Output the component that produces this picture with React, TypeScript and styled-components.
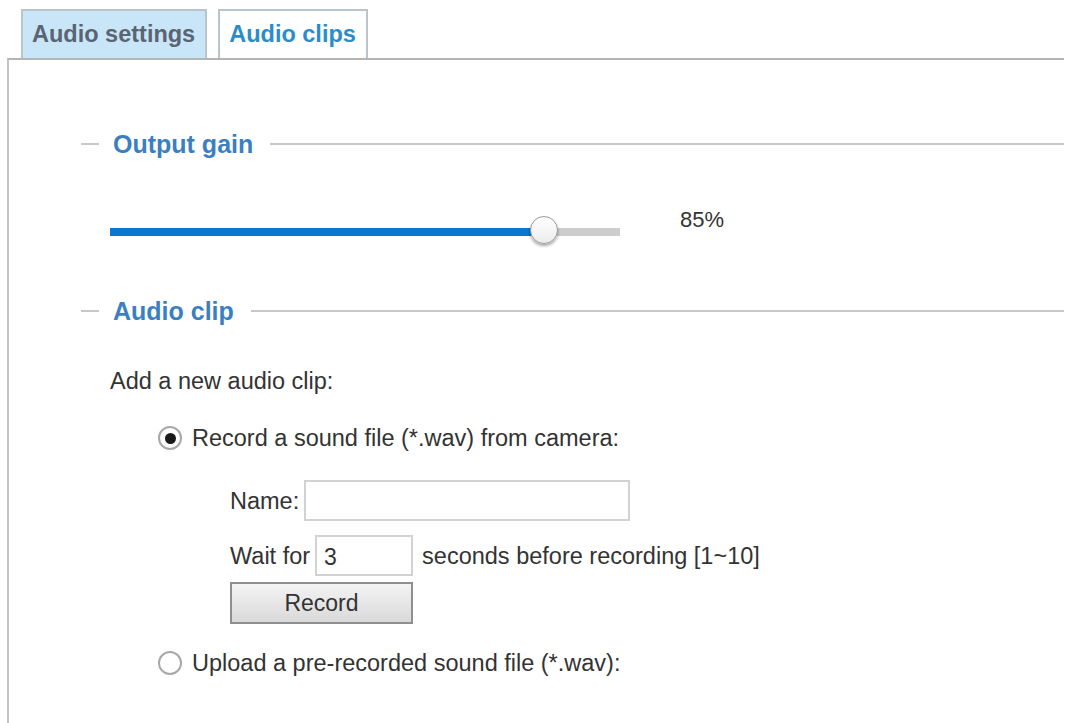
import styled, { createGlobalStyle } from 'styled-components';

const GlobalStyle = createGlobalStyle`
  html, body {
    margin: 0;
    padding: 0;
    background: #ffffff;
  }

  body {
    font-family: "Liberation Sans", Arial, sans-serif;
    color: #333333;
  }
`;

const tabs = [
  { label: 'Audio settings', active: false },
  { label: 'Audio clips', active: true },
];

function Legend(props: Readonly<{ title: string }>) {
  return (
    <LegendRow>
      <Dash />
      <LegendTitle>{props.title}</LegendTitle>
      <Rule />
    </LegendRow>
  );
}

function Radio(props: Readonly<{ checked: boolean }>) {
  return (
    <RadioCircle>
      {props.checked && <RadioDot />}
    </RadioCircle>
  );
}

function App() {
  const gain = 85;

  return (
    <Page>
      <GlobalStyle />

      <TabBar>
        { tabs.map((tab) => (
          <Tab key={tab.label} active={tab.active}>{tab.label}</Tab>
        ))}
      </TabBar>

      <Panel>
        <Legend title='Output gain' />

        <SliderRow>
          <Track>
            <TrackFill style={{ width: `${gain}%` }} />
            <Thumb style={{ left: `${gain}%` }} />
          </Track>
          <GainValue>{gain}%</GainValue>
        </SliderRow>

        <Legend title='Audio clip' />

        <Section>
          <Text>Add a new audio clip:</Text>

          <OptionRow>
            <Radio checked />
            <Text>Record a sound file (*.wav) from camera:</Text>
          </OptionRow>

          <RecordForm>
            <FieldRow>
              <Text>Name:</Text>
              <TextInput width={326} />
            </FieldRow>
            <FieldRow>
              <Text>Wait for</Text>
              <TextInput width={98} defaultValue='3' />
              <Hint>seconds before recording [1~10]</Hint>
            </FieldRow>
            <RecordButton>Record</RecordButton>
          </RecordForm>

          <OptionRow>
            <Radio checked={false} />
            <Text>Upload a pre-recorded sound file (*.wav):</Text>
          </OptionRow>
        </Section>
      </Panel>
    </Page>
  );
}

const Page = styled.div`
  width: 1070px;
  height: 723px;
  overflow: hidden;
`;

const TabBar = styled.div`
  display: flex;
  gap: 11px;
  padding: 9px 0 0 21px;
`;

const Tab = styled.div<{ active: boolean }>`
  box-sizing: border-box;
  height: 49px;
  padding: 0 10px 0 9px;
  display: flex;
  align-items: center;
  border: 2px solid #b9c4cc;
  border-bottom: none;
  background-color: ${props => props.active ? '#ffffff' : '#c8e6f8'};
  color: ${props => props.active ? '#2b8ccb' : '#5a6472'};
  font-weight: 700;
  font-size: 23.5px;
`;

const Panel = styled.div`
  box-sizing: border-box;
  margin-left: 7px;
  width: 1057px;
  height: 665px;
  border-top: 2px solid #b4b4b4;
  border-left: 2px solid #c4c4c4;
  padding: 69px 0 0 72px;
`;

const LegendRow = styled.div`
  display: flex;
  align-items: center;
  height: 30px;
`;

const Dash = styled.div`
  width: 18px;
  height: 2px;
  background-color: #c8c8c8;
  margin-right: 14px;
`;

const LegendTitle = styled.span`
  color: #3b7fc3;
  font-weight: 700;
  font-size: 25px;
  margin-right: 17px;
`;

const Rule = styled.div`
  flex: 1;
  height: 2px;
  background-color: #c8c8c8;
`;

const SliderRow = styled.div`
  display: flex;
  align-items: center;
  padding-left: 29px;
  margin: 53px 0 44px;
  height: 40px;
`;

const Track = styled.div`
  position: relative;
  width: 510px;
  height: 8px;
  background-color: #cdcdcd;
`;

const TrackFill = styled.div`
  height: 100%;
  background-color: #0b77cf;
`;

const Thumb = styled.div`
  position: absolute;
  top: 50%;
  width: 28px;
  height: 28px;
  margin: -16px 0 0 -14px;
  box-sizing: border-box;
  border-radius: 50%;
  border: 1px solid #9a9a9a;
  background: linear-gradient(#ffffff, #ececec);
  box-shadow: 0 2px 3px rgba(0, 0, 0, 0.35);
`;

const GainValue = styled.span`
  align-self: flex-start;
  margin-left: 60px;
  font-size: 22px;
  line-height: 16px;
  color: #333333;
`;

const Section = styled.div`
  display: flex;
  flex-direction: column;
  align-items: flex-start;
  padding: 41px 0 0 29px;
`;

const Text = styled.span`
  font-size: 23.5px;
  line-height: 28px;
  color: #333333;
  white-space: nowrap;
`;

const Hint = styled(Text)`
  margin-left: 4px;
`;

const OptionRow = styled.div`
  display: flex;
  align-items: center;
  gap: 10px;
  margin: 29px 0 0 48px;

  & + & {
    margin-top: 25px;
  }
`;

const RadioCircle = styled.span`
  box-sizing: border-box;
  width: 24px;
  height: 24px;
  border-radius: 50%;
  border: 2px solid #a8a8a8;
  background: #ffffff;
  display: flex;
  align-items: center;
  justify-content: center;
`;

const RadioDot = styled.span`
  width: 11px;
  height: 11px;
  border-radius: 50%;
  background-color: #1a1a1a;
`;

const RecordForm = styled.div`
  display: flex;
  flex-direction: column;
  align-items: flex-start;
  margin: 28px 0 0 120px;

  & + ${OptionRow} {
    margin-top: 25px;
  }
`;

const FieldRow = styled.div`
  display: flex;
  align-items: center;
  gap: 5px;

  & + & {
    margin-top: 14px;
  }
`;

const TextInput = styled.input<{ width: number }>`
  box-sizing: border-box;
  width: ${props => props.width}px;
  height: 41px;
  border: 2px solid #d2d2d2;
  padding: 4px 7px 0;
  font-family: "Liberation Sans", Arial, sans-serif;
  font-size: 23px;
  color: #333333;
  outline: none;
`;

const RecordButton = styled.button`
  box-sizing: border-box;
  margin-top: 6px;
  width: 183px;
  height: 42px;
  border: 2px solid #8f8f8f;
  background: linear-gradient(#f4f4f4, #d9d9d9);
  font-family: "Liberation Sans", Arial, sans-serif;
  font-size: 23px;
  color: #333333;
`;

export default App;
